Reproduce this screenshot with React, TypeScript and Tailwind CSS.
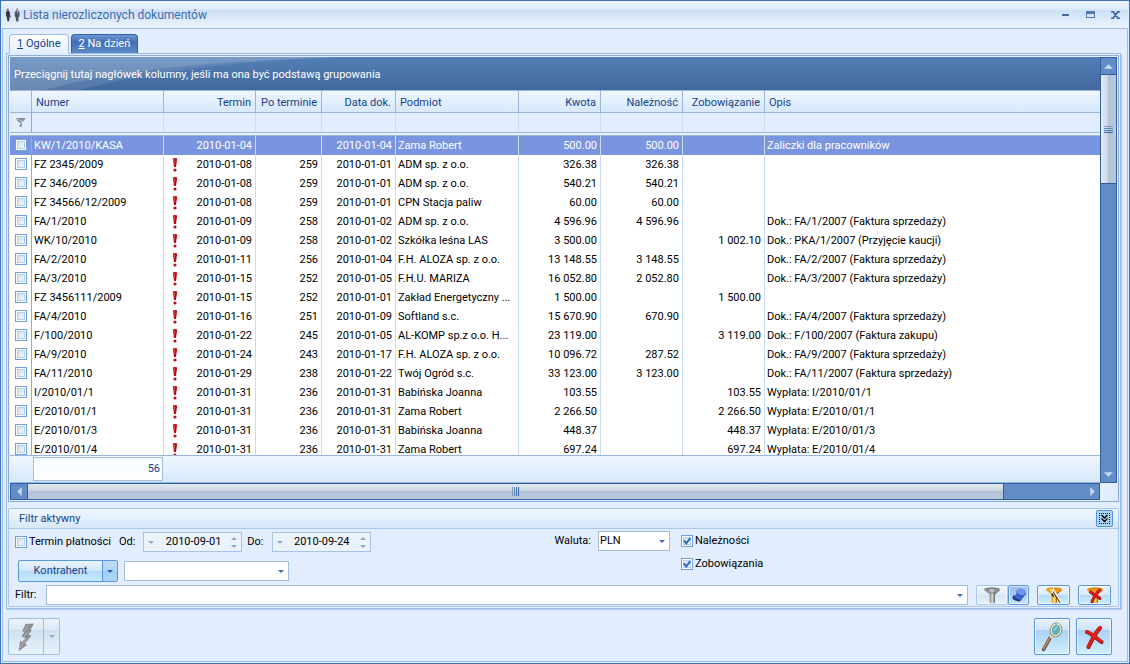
import { useState, type ReactNode } from "react";
import clsx from "clsx";

type DocumentRow = {
  number: string;
  due: string;
  overdue: string;
  issued: string;
  party: string;
  amount: string;
  receivable: string;
  liability: string;
  description: string;
};

const toRow = (line: string): DocumentRow => {
  const [number, due, overdue, issued, party, amount, receivable, liability, description] = line.split("|");
  return { number, due, overdue, issued, party, amount, receivable, liability, description };
};

const rows = [
  "KW/1/2010/KASA|2010-01-04||2010-01-04|Zama Robert|500.00|500.00||Zaliczki dla pracowników",
  "FZ 2345/2009|2010-01-08|259|2010-01-01|ADM sp. z o.o.|326.38|326.38||",
  "FZ 346/2009|2010-01-08|259|2010-01-01|ADM sp. z o.o.|540.21|540.21||",
  "FZ 34566/12/2009|2010-01-08|259|2010-01-01|CPN Stacja paliw|60.00|60.00||",
  "FA/1/2010|2010-01-09|258|2010-01-02|ADM sp. z o.o.|4 596.96|4 596.96||Dok.: FA/1/2007 (Faktura sprzedaży)",
  "WK/10/2010|2010-01-09|258|2010-01-02|Szkółka leśna LAS|3 500.00||1 002.10|Dok.: PKA/1/2007 (Przyjęcie kaucji)",
  "FA/2/2010|2010-01-11|256|2010-01-04|F.H. ALOZA sp. z o.o.|13 148.55|3 148.55||Dok.: FA/2/2007 (Faktura sprzedaży)",
  "FA/3/2010|2010-01-15|252|2010-01-05|F.H.U. MARIZA|16 052.80|2 052.80||Dok.: FA/3/2007 (Faktura sprzedaży)",
  "FZ 3456111/2009|2010-01-15|252|2010-01-01|Zakład Energetyczny ...|1 500.00||1 500.00|",
  "FA/4/2010|2010-01-16|251|2010-01-09|Softland s.c.|15 670.90|670.90||Dok.: FA/4/2007 (Faktura sprzedaży)",
  "F/100/2010|2010-01-22|245|2010-01-05|AL-KOMP sp.z o.o. H...|23 119.00||3 119.00|Dok.: F/100/2007 (Faktura zakupu)",
  "FA/9/2010|2010-01-24|243|2010-01-17|F.H. ALOZA sp. z o.o.|10 096.72|287.52||Dok.: FA/9/2007 (Faktura sprzedaży)",
  "FA/11/2010|2010-01-29|238|2010-01-22|Twój Ogród s.c.|33 123.00|3 123.00||Dok.: FA/11/2007 (Faktura sprzedaży)",
  "I/2010/01/1|2010-01-31|236|2010-01-31|Babińska Joanna|103.55||103.55|Wypłata: I/2010/01/1",
  "E/2010/01/1|2010-01-31|236|2010-01-31|Zama Robert|2 266.50||2 266.50|Wypłata: E/2010/01/1",
  "E/2010/01/3|2010-01-31|236|2010-01-31|Babińska Joanna|448.37||448.37|Wypłata: E/2010/01/3",
  "E/2010/01/4|2010-01-31|236|2010-01-31|Zama Robert|697.24||697.24|Wypłata: E/2010/01/4"
].map(toRow);

const columns: { key: keyof DocumentRow; label: string; width: string; right?: boolean }[] = [
  { key: "number", label: "Numer", width: "w-[132px]" },
  { key: "due", label: "Termin", width: "w-[92px]", right: true },
  { key: "overdue", label: "Po terminie", width: "w-[66px]", right: true },
  { key: "issued", label: "Data dok.", width: "w-[74px]", right: true },
  { key: "party", label: "Podmiot", width: "w-[123px]" },
  { key: "amount", label: "Kwota", width: "w-[82px]", right: true },
  { key: "receivable", label: "Należność", width: "w-[82px]", right: true },
  { key: "liability", label: "Zobowiązanie", width: "w-[82px]", right: true },
  { key: "description", label: "Opis", width: "" }
];

function Arrow({ dir, className }: { dir: "up" | "down" | "left" | "right"; className?: string }) {
  const paths = { up: "M0 5 5 0l5 5z", down: "M0 0h10L5 5z", left: "M5 0v10L0 5z", right: "M0 0v10l5-5z" };
  const vertical = dir === "up" || dir === "down";
  return (
    <svg
      viewBox={vertical ? "0 0 10 5" : "0 0 5 10"}
      className={clsx("shrink-0 fill-current", className)}
      aria-hidden="true"
    >
      <path d={paths[dir]} />
    </svg>
  );
}

function CheckBox({ label, defaultChecked, hideLabel }: { label: string; defaultChecked?: boolean; hideLabel?: boolean }) {
  return (
    <label className="flex items-center gap-0.5 whitespace-nowrap">
      <span className="grid size-3">
        <input
          type="checkbox"
          defaultChecked={defaultChecked}
          aria-label={hideLabel ? label : undefined}
          className="peer col-start-1 row-start-1 size-3 appearance-none border border-[#6f9fdc] bg-linear-to-br from-[#c3d8f2] to-white shadow-[inset_0_0_0_1px_#fff,inset_0_0_0_2px_#b3cdee]"
        />
        <svg
          viewBox="0 0 12 12"
          className="pointer-events-none invisible col-start-1 row-start-1 size-3 peer-checked:visible"
          aria-hidden="true"
        >
          <path d="M3 5.5 5.3 8.3 9.3 3.2" fill="none" stroke="#2f6cb8" strokeWidth="2" />
        </svg>
      </span>
      {!hideLabel && <span>{label}</span>}
    </label>
  );
}

function ComboBox({ label, options, className }: { label: string; options: string[]; className?: string }) {
  return (
    <span className={clsx("relative flex h-5 items-center border border-[#a3bde0] bg-white", className)}>
      <select aria-label={label} className="h-full w-full appearance-none bg-transparent px-px outline-none">
        {options.map((option) => (
          <option key={option}>{option}</option>
        ))}
      </select>
      <Arrow dir="down" className="pointer-events-none absolute right-1 h-[3px] w-[6px] text-[#3a6fb7]" />
    </span>
  );
}

function DateBox({ label, value }: { label: string; value: string }) {
  return (
    <label className="flex items-center gap-2">
      {label}
      <span className="flex h-5 w-[99px] items-center border border-[#a9c1e2] bg-[#ecf2fa] pr-1 pl-1 text-[#8ba8cf]">
        <Arrow dir="down" className="h-[3px] w-[6px]" />
        <input defaultValue={value} className="w-0 flex-1 bg-transparent pr-2.5 text-right text-black outline-none" />
        <span className="flex flex-col gap-[5px]">
          <Arrow dir="up" className="h-[3px] w-[6px]" />
          <Arrow dir="down" className="h-[3px] w-[6px]" />
        </span>
      </span>
    </label>
  );
}

type ButtonTone = "blue" | "deep" | "pressed" | "disabled";

const buttonTones: Record<ButtonTone, string> = {
  blue: "border-[#5a98dd] bg-[linear-gradient(#ecf5fe,#d8e9fa_50%,#b5d9f7_50%,#cfeffd)]",
  deep: "border-[#5a98dd] bg-[linear-gradient(#e6f2fd,#cfe4f9_30%,#a9d1f5_31%,#d0effd)]",
  pressed: "border-[#5a98dd] bg-[linear-gradient(#9dbfe9,#a9caf0_50%,#a5ccf3_50%,#cbe5fb)]",
  disabled: "border-[#a5c7f0] bg-[linear-gradient(#edf4fb,#e3edf8_50%,#d2e2f1_50%,#e6f3fb)]"
};

function IconButton({
  label,
  tone = "blue",
  className,
  children
}: {
  label: string;
  tone?: ButtonTone;
  className?: string;
  children: ReactNode;
}) {
  return (
    <button
      type="button"
      aria-label={label}
      className={clsx(
        "flex items-center justify-center rounded-xs border shadow-[inset_0_0_0_1px_#ffffff99]",
        buttonTones[tone],
        className
      )}
    >
      {children}
    </button>
  );
}

function Funnel({ tone = "gold", mark }: { tone?: "gold" | "gray"; mark?: "wand" | "cross" }) {
  const gold = tone === "gold";
  return (
    <svg viewBox="0 0 18 18" className="size-[18px]" aria-hidden="true">
      <path d="M1 3.2c0-2.4 16-2.4 16 0 0 1.6-2.4 2.8-5 5.2v7.8c0 1.4-5.4 1.4-5.4 0V8.4C4 6 1 4.8 1 3.2z" fill={gold ? "#f0a012" : "#96999c"} />
      <path d="M8.2 6.5v10.4c.9.3 1.5.2 2 0V6.5z" fill={gold ? "#ffd977" : "#cfd1d3"} />
      <path d="M11 6.5v10.2l1-.5V8.4c2.6-2.4 5-3.6 5-5.2-1.8 1.9-4 2.7-6 3.3z" fill={gold ? "#b86c06" : "#75787b"} />
      <ellipse cx="9" cy="2.9" rx="7" ry="1.3" fill={gold ? "#d98f10" : "#7e8184"} />
      {tone === "gray" && <ellipse cx="9" cy="4.6" rx="3.2" ry="2.6" fill="#bcbec0" stroke="#85888b" />}
      {mark === "wand" && (
        <>
          <path d="m9 5.5 6.8 10.8" stroke="#3a2a12" strokeWidth="2.6" />
          <path d="m9.6 5.6 6.8 10.6" stroke="#fff" strokeWidth="1.8" />
          <path d="M4.6 3.6 10.6 5M9 1.2 7 7.6" stroke="#fff" strokeWidth="1.2" />
          <path d="m6.6 7.6 2.2 3.2" stroke="#2b2112" strokeWidth="1.4" />
        </>
      )}
      {mark === "cross" && (
        <>
          <path d="m4.4 6 9.6 6.4M13.5 4C10.4 7 8.4 10.6 6 15.6" stroke="#7d1715" strokeWidth="3" strokeLinecap="round" />
          <path d="m4.4 5.6 9.6 6.4M13.5 3.6C10.4 6.8 8.4 10.2 6 15.2" stroke="#e01818" strokeWidth="2.2" strokeLinecap="round" />
        </>
      )}
    </svg>
  );
}

function PeopleIcon() {
  return (
    <svg viewBox="0 0 16 14" className="h-3.5 w-4" aria-hidden="true">
      <path d="M1 4 2.2 3h1.6L5 4.4v4.2l-.6.6-.2 4H2.4L1.8 9 1 8z" fill="#2f3742" />
      <rect x="1.6" y=".4" width="2.3" height="2.8" rx="1" fill="#a2714f" />
      <path d="M4.2 7.4h1.6v2.2H4.2z" fill="#a53a26" />
      <path d="M9.8 4 11 3h2.4l1.2 1.2-.2 4.4-.8.6-.4 4.2h-1.9L10.5 9l-.7-1z" fill="#465464" />
      <rect x="11" y=".4" width="2.3" height="2.8" rx="1" fill="#9a8a80" />
      <path d="M11.9 3.2h1l-.4 3z" fill="#cfdbe8" />
    </svg>
  );
}

function OverdueMark() {
  return (
    <svg viewBox="0 0 6 14" className="h-3.5 w-1.5" role="img" aria-label="Po terminie">
      <path d="M.8.6Q3-.4 5.2.6L4 9H2z" fill="#b80d10" />
      <path d="M1.6 1.2h1.2L2.8 7z" fill="#f06058" />
      <circle cx="3" cy="12" r="1.6" fill="#b51317" />
    </svg>
  );
}

function TitleBar() {
  return (
    <header className="flex h-[27px] items-center gap-0.5 bg-[linear-gradient(#eff6fe,#dbe9fa_32%,#cbdff6_33%,#ecf4fd)] pr-2 pl-[3px]">
      <PeopleIcon />
      <h1 className="flex-1 text-xs text-[#3c6cb0]">Lista nierozliczonych dokumentów</h1>
      <div className="flex items-center gap-4 text-[#45699f]">
        <button type="button" aria-label="Minimalizuj" className="flex size-[9px] items-center justify-center">
          <span className="h-0.5 w-[7px] bg-[#45699f]" />
        </button>
        <button type="button" aria-label="Maksymalizuj" className="h-[7px] w-[9px] border border-t-3 border-[#5579ae]" />
        <button type="button" aria-label="Zamknij">
          <svg viewBox="0 0 9 8" className="h-2 w-[9px]" aria-hidden="true">
            <path d="m1.5 0 6 8M7.5 0l-6 8M0 .5h3M6 .5h3M0 7.5h3M6 7.5h3" stroke="currentColor" strokeWidth="1.8" />
          </svg>
        </button>
      </div>
    </header>
  );
}

function GroupPanel() {
  return (
    <div className="relative flex h-[33px] shrink-0 items-center bg-linear-to-b from-[#537fb6] to-[#42689d] px-1 pt-0.5 text-white">
      <svg
        viewBox="0 0 330 33"
        preserveAspectRatio="none"
        className="absolute top-0 left-0 h-full w-[330px]"
        aria-hidden="true"
      >
        <path d="M0 0h330C200 5 130 18 68 33H0z" fill="#fff" opacity=".1" />
        <path d="M0 0h330C180 5 100 15 34 33H0z" fill="#fff" opacity=".13" />
      </svg>
      <p className="relative">Przeciągnij tutaj nagłówek kolumny, jeśli ma ona być podstawą grupowania</p>
    </div>
  );
}

function DocumentsTable() {
  return (
    <table className="w-full table-fixed border-separate border-spacing-0">
      <colgroup>
        <col className="w-[22px]" />
        {columns.map((column) => (
          <col key={column.key} className={column.width} />
        ))}
      </colgroup>
      <thead>
        <tr className="h-[23px] bg-linear-to-b from-[#f0f7ff] to-[#d6e8fb] text-[#15428b]">
          <th className="border-y border-r border-[#9bb6db]" aria-label="Zaznaczenie" />
          {columns.map((column) => (
            <th
              key={column.key}
              className={clsx(
                "border-y border-r border-[#9bb6db] px-1 pt-0.5 font-normal whitespace-nowrap last:border-r-0",
                column.right ? "text-right" : "text-left"
              )}
            >
              {column.label}
            </th>
          ))}
        </tr>
        <tr className="h-5 bg-[#e2eeff]">
          <td className="border-r border-b border-r-[#8fabd2] border-b-[#9bb6db]">
            <svg viewBox="0 0 9 9" className="mx-auto size-[9px]" aria-hidden="true">
              <path d="M0 0h9v1.5L6 4v4.5L3.5 9V7L5 5.5 1.5 3z" fill="#8b8d92" />
              <path d="m1 1 5 2-1 3" fill="none" stroke="#c4c6ca" />
            </svg>
          </td>
          {columns.map((column) => (
            <td
              key={column.key}
              className="border-r border-b border-r-[#cbdcf2] border-b-[#9bb6db] last:border-r-0"
            />
          ))}
        </tr>
        <tr className="h-[3px] bg-[#e9f2fd]">
          <td colSpan={10} className="border-b border-[#9bb6db]" />
        </tr>
      </thead>
      <tbody>
        {rows.map((row, index) => (
          <tr key={row.number} className={clsx("h-[19px]", index === 0 ? "bg-[#7a95df] text-white" : "bg-white")}>
            <td className="border-r border-[#8fabd2] p-0 pb-0.5 pl-[5px]">
              <CheckBox label={`Zaznacz ${row.number}`} hideLabel />
            </td>
            {columns.map((column) => (
              <td
                key={column.key}
                className={clsx(
                  "truncate border-r border-[#c9dcf3] py-0 pr-[3px] pl-0.5 last:border-r-0",
                  column.right && "text-right"
                )}
              >
                {column.key === "due" ? (
                  <span className="flex items-center justify-between pl-1.5">
                    <span>{row.overdue && <OverdueMark />}</span>
                    {row.due}
                  </span>
                ) : (
                  row[column.key]
                )}
              </td>
            ))}
          </tr>
        ))}
      </tbody>
    </table>
  );
}

function VerticalScrollbar() {
  return (
    <div className="flex w-[17px] shrink-0 flex-col border border-[#2f5f9e] bg-[#628cc6] text-[#c7d9f1]">
      <button type="button" aria-label="W górę" className="flex h-[17px] items-center justify-center border-b border-[#2f5f9e]">
        <Arrow dir="up" className="h-[5px] w-[9px]" />
      </button>
      <div className="flex h-[109px] flex-col items-center justify-center gap-px border-b border-[#2f5f9e] bg-[linear-gradient(to_right,#e6ecf2,#cbd6e2_48%,#b0c1d8_49%,#bccadd)]">
        <span className="h-px w-[9px] bg-[#7f9cc4]" />
        <span className="h-px w-[9px] bg-[#6387b8]" />
        <span className="h-px w-[9px] bg-[#4d77b1]" />
        <span className="h-px w-[9px] bg-[#3f69a6]" />
      </div>
      <button type="button" aria-label="W dół" className="mt-auto flex h-[15px] items-center justify-center">
        <Arrow dir="down" className="h-[5px] w-[9px]" />
      </button>
    </div>
  );
}

function HorizontalScrollbar() {
  return (
    <div className="mr-[17px] flex h-[17px] shrink-0 border border-[#2f5f9e] bg-[#628cc6] text-[#c7d9f1]">
      <button type="button" aria-label="W lewo" className="flex w-[17px] items-center justify-center border-r border-[#2f5f9e]">
        <Arrow dir="left" className="h-[9px] w-[5px]" />
      </button>
      <div className="flex flex-1 items-center justify-center gap-px border-r border-[#2f5f9e] bg-[linear-gradient(#e2e8ef,#c9d4e0_48%,#b0c1d8_49%,#bccadd)]">
        <span className="h-[9px] w-px bg-[#7f9cc4]" />
        <span className="h-[9px] w-px bg-[#6387b8]" />
        <span className="h-[9px] w-px bg-[#4d77b1]" />
        <span className="h-[9px] w-px bg-[#3f69a6]" />
      </div>
      <button type="button" aria-label="W prawo" className="flex w-[95px] items-center justify-end pr-1">
        <Arrow dir="right" className="h-[9px] w-[5px]" />
      </button>
    </div>
  );
}

function FilterPanel() {
  return (
    <section className="rounded-xs border border-[#a5c7f0]">
      <div className="flex h-5 items-center justify-between border-b border-[#a5c7f0] bg-linear-to-b from-[#f0f7ff] to-[#d6e8fb] pr-[5px] pl-2.5 text-[#15428b]">
        <h2>Filtr aktywny</h2>
        <button
          type="button"
          aria-label="Zwiń filtr"
          className="flex size-[17px] items-center justify-center rounded-xs border border-[#4f93df] bg-[#acd7fb]"
        >
          <svg viewBox="0 0 11 11" className="size-[11px]" aria-hidden="true">
            <path d="M0 .5h11M0 10.5h11M.5 0v11M10.5 0v11" stroke="#111" strokeDasharray="1 1" />
            <path d="m2.5 2 3 3 3-3M2.5 5.5l3 3 3-3" fill="none" stroke="#000" strokeWidth="1.5" />
          </svg>
        </button>
      </div>
      <div className="flex pt-0.5 pl-1.5">
        <div className="w-[538px]">
          <div className="flex items-center gap-2 pt-px">
            <CheckBox label="Termin płatności" />
            <div className="flex gap-[5px]">
              <DateBox label="Od:" value="2010-09-01" />
              <DateBox label="Do:" value="2010-09-24" />
            </div>
          </div>
          <div className="flex items-center gap-1.5 pt-2 pl-[3px]">
            <div className="flex h-[22px] rounded-xs border border-[#5a98dd] bg-[linear-gradient(#eaf4fd,#d3e7f9_50%,#b5d9f7_50%,#c5ecff)] text-[#15428b]">
              <button type="button" className="w-[83px]">
                Kontrahent
              </button>
              <button
                type="button"
                aria-label="Rozwiń listę kontrahentów"
                className="flex w-[15px] items-center justify-center border-l border-[#5a98dd] bg-[#8fc1f2]/50"
              >
                <Arrow dir="down" className="h-[3px] w-[6px] text-[#2c65ad]" />
              </button>
            </div>
            <ComboBox label="Kontrahent" options={[""]} className="w-[165px]" />
          </div>
        </div>
        <div className="flex items-start gap-[11px]">
          <div className="flex items-center gap-[7px]">
            <span className="w-[38px] text-right whitespace-nowrap">Waluta:</span>
            <ComboBox label="Waluta" options={["PLN", "EUR"]} className="w-[72px]" />
          </div>
          <div className="flex flex-col gap-[9px] pt-[3px]">
            <CheckBox label="Należności" defaultChecked />
            <CheckBox label="Zobowiązania" defaultChecked />
          </div>
        </div>
      </div>
      <div className="flex items-center gap-2 pt-[3px] pr-[7px] pb-px pl-1.5">
        <span className="flex flex-1 items-center">
          <span className="w-[31px]">Filtr:</span>
          <ComboBox label="Filtr" options={[""]} className="flex-1" />
        </span>
        <div className="flex">
          <IconButton label="Zastosuj filtr" tone="disabled" className="h-5 w-8">
            <Funnel tone="gray" />
          </IconButton>
          <IconButton label="Przypnij filtr" tone="pressed" className="h-5 w-[21px]">
            <svg viewBox="0 0 14 14" className="size-3.5" aria-hidden="true">
              <ellipse cx="5" cy="10.4" rx="4.6" ry="2.6" transform="rotate(20 5 10.4)" fill="#22397f" />
              <path d="m2.4 9.6 3-6 6.6 5-3 3.6z" fill="#3f66cb" />
              <ellipse cx="9" cy="4.8" rx="4.8" ry="3.8" transform="rotate(25 9 4.8)" fill="#3157bf" />
              <ellipse cx="8.8" cy="4" rx="4.4" ry="3" transform="rotate(25 8.8 4)" fill="#6f95f0" />
            </svg>
          </IconButton>
        </div>
        <IconButton label="Kreator filtra" className="h-5 w-[33px]">
          <Funnel mark="wand" />
        </IconButton>
        <IconButton label="Wyczyść filtr" className="h-5 w-[33px]">
          <Funnel mark="cross" />
        </IconButton>
      </div>
    </section>
  );
}

function ActionBar() {
  return (
    <footer className="flex items-start justify-between pt-[9px] pr-[15px] pb-1.5 pl-[5px]">
      <div className="flex h-[37px] rounded-xs border border-[#a3bde0] bg-[linear-gradient(#edf3fa,#dfeaf5_30%,#cfe0ee_31%,#e6f3fb)]">
        <button type="button" aria-label="Wykonaj operację" className="flex w-[34px] items-center justify-center">
          <svg viewBox="0 0 18 30" className="h-[30px] w-[18px]" aria-hidden="true">
            <path d="m8.5 2 8.5-.6-3.4 6 1.4.6-3.6 4.6 3 1.2L8 21.5l2 1.5-8.4 6.2L3.2 18.6l1.6 1.6L8.6 16l-4.2-1.6 3-4.4-2.2-.8z" fill="#8b8f94" />
            <path d="m11 3-3.5 6M10.4 10l-3.6 4.6M9.6 16.5 3 26" stroke="#b4b8bc" fill="none" />
          </svg>
        </button>
        <button
          type="button"
          aria-label="Więcej operacji"
          className="flex w-4 items-center justify-center border-l border-[#a3bde0] text-[#8ba8cf]"
        >
          <Arrow dir="down" className="h-[3px] w-[6px]" />
        </button>
      </div>
      <div className="flex gap-1.5">
        <IconButton label="Podgląd" tone="deep" className="h-[37px] w-9">
          <svg viewBox="0 0 22 30" className="h-[30px] w-[22px]" aria-hidden="true">
            <path d="M2.5 27.5 9 16" stroke="#6b4238" strokeWidth="3.4" strokeLinecap="round" />
            <path d="M2.5 27 8.5 16.5" stroke="#c08770" strokeWidth="1.6" strokeLinecap="round" />
            <path d="m9.5 16 2.5-4" stroke="#e6dfb2" strokeWidth="2.6" />
            <ellipse cx="15" cy="7.8" rx="5.2" ry="6.4" transform="rotate(15 15 7.8)" fill="#62adbd" stroke="#77765b" strokeWidth="2" />
            <ellipse cx="15" cy="7.8" rx="4.8" ry="6" transform="rotate(15 15 7.8)" fill="none" stroke="#efe9c4" strokeWidth="1.4" />
            <path d="m12.8 8.4 4-4.5" stroke="#8fd0dc" strokeWidth="1.6" />
          </svg>
        </IconButton>
        <IconButton label="Zamknij okno" tone="deep" className="h-[37px] w-9">
          <svg viewBox="0 0 20 24" className="h-6 w-5" aria-hidden="true">
            <path d="M3 7c5 2 9 6 14.5 10M16 3C11 8 8 15 4.5 22" fill="none" stroke="#7d1715" strokeWidth="4" strokeLinecap="round" />
            <path d="M3 6.6c5 2 9 6 14.5 10M16 2.6C11 8 8 14.6 4.5 21.6" fill="none" stroke="#e81b1b" strokeWidth="3" strokeLinecap="round" />
          </svg>
        </IconButton>
      </div>
    </footer>
  );
}

export default function App() {
  const [tab, setTab] = useState(0);

  return (
    <main className="flex h-screen flex-col border border-[#3f72b5] bg-[#e2eeff] px-px pb-px font-[Roboto,'Liberation_Sans',sans-serif] text-[11px] leading-[14px] text-black">
      <TitleBar />
      <div className="flex min-h-0 flex-1 flex-col border border-[#9bbdeb]">
        <div role="tablist" className="flex items-end gap-0.5 pt-[5px] pl-1.5">
          {["Ogólne", "Na dzień"].map((name, index) => (
            <button
              key={name}
              type="button"
              role="tab"
              aria-selected={tab === index}
              onClick={() => setTab(index)}
              className={clsx(
                "rounded-t-sm border px-[7px]",
                tab === index
                  ? "relative z-10 -mb-px h-5 border-[#9bbdeb] border-b-[#e2eeff] bg-linear-to-b from-white to-[#e2eeff] text-[#15428b]"
                  : "h-[19px] border-[#2f62ab] border-b-0 bg-linear-to-b from-[#6d97d2] from-0% via-[#426fb4] via-40% to-[#5c8bcb] text-white"
              )}
            >
              <span className="underline">{index + 1}</span> {name}
            </button>
          ))}
        </div>
        <div className="mr-1.5 ml-[3px] flex min-h-0 flex-1 flex-col gap-1.5 border border-[#9bbdeb] p-px shadow-[1px_1px_1px_#b7cdea]">
          <section className="flex min-h-0 flex-1 flex-col border border-[#8fabd9] p-px">
            <div className="flex min-h-0 flex-1">
              <div className="flex min-h-0 min-w-0 flex-1 flex-col">
                <GroupPanel />
                <div className="min-h-0 flex-1 overflow-hidden bg-white">
                  <DocumentsTable />
                </div>
                <div className="flex h-7 shrink-0 border-y border-[#9bb6db] bg-linear-to-b from-[#f0f7ff] to-[#d6e8fb] py-px pl-[23px] text-[#15428b]">
                  <output className="flex w-[130px] items-center justify-end border border-[#a3bde0] bg-linear-to-b from-[#f6faff] to-white px-0.5">
                    56
                  </output>
                </div>
              </div>
              <VerticalScrollbar />
            </div>
            <HorizontalScrollbar />
          </section>
          <FilterPanel />
        </div>
        <ActionBar />
      </div>
    </main>
  );
}
